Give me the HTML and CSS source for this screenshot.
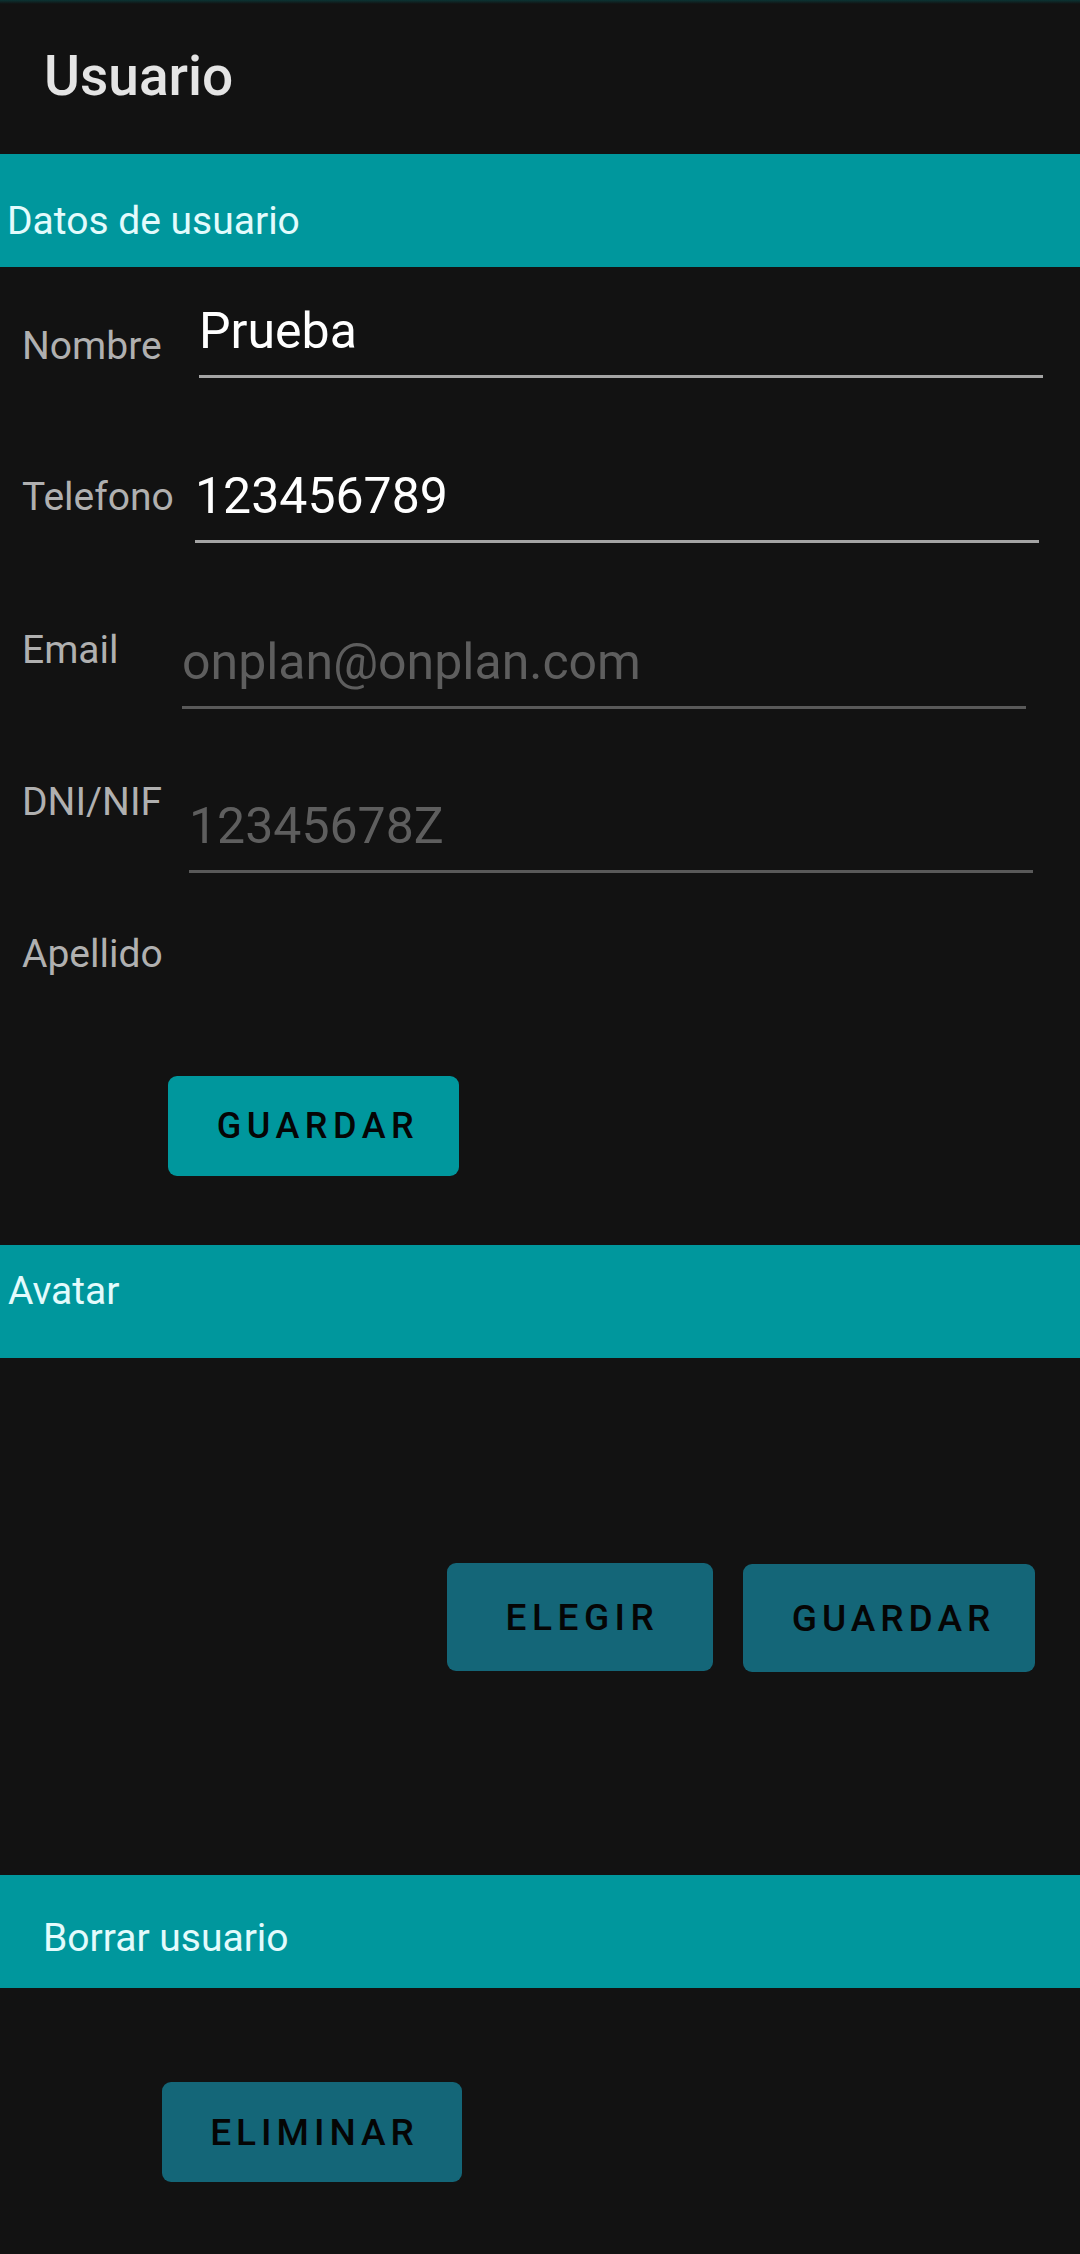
FILE: index.html
```html
<!DOCTYPE html>
<html lang="es">
<head>
<meta charset="utf-8">
<title>Usuario</title>
<link rel="stylesheet" href="styles.css">
</head>
<body>
<div class="screen">
  <header class="appbar">
    <h1 class="appbar-title">Usuario</h1>
  </header>

  <section class="section">
    <div class="section-head head-datos">Datos de usuario</div>
    <div class="form">
      <div class="row row-nombre">
        <label class="lbl lbl-nombre">Nombre</label>
        <input class="field field-nombre field-filled" type="text" value="Prueba">
      </div>
      <div class="row row-telefono">
        <label class="lbl lbl-telefono">Telefono</label>
        <input class="field field-telefono field-filled" type="text" value="123456789">
      </div>
      <div class="row row-email">
        <label class="lbl lbl-email">Email</label>
        <input class="field field-email field-empty" type="text" placeholder="onplan@onplan.com">
      </div>
      <div class="row row-dni">
        <label class="lbl lbl-dni">DNI/NIF</label>
        <input class="field field-dni field-empty" type="text" placeholder="12345678Z">
      </div>
      <div class="row row-apellido">
        <label class="lbl">Apellido</label>
      </div>
      <div class="actions actions-datos">
        <button class="btn btn-primary btn-guardar1" type="button">GUARDAR</button>
      </div>
    </div>
  </section>

  <section class="section">
    <div class="section-head head-avatar">Avatar</div>
    <div class="avatar-body">
      <div class="avatar-actions">
        <button class="btn btn-dark btn-elegir" type="button">ELEGIR</button>
        <button class="btn btn-dark btn-guardar2" type="button">GUARDAR</button>
      </div>
    </div>
  </section>

  <section class="section">
    <div class="section-head head-borrar">Borrar usuario</div>
    <div class="borrar-body">
      <button class="btn btn-dark btn-eliminar" type="button">ELIMINAR</button>
    </div>
  </section>
</div>
</body>
</html>
```

FILE: styles.css
```css
html, body {
  margin: 0;
  padding: 0;
  background: #121212;
}

body {
  font-family: Roboto, "Liberation Sans", sans-serif;
  color: #ffffff;
}

.screen {
  width: 1080px;
  height: 2254px;
  background: #121212;
  overflow: hidden;
}

/* App bar */
.appbar {
  height: 154px;
  box-sizing: border-box;
  padding: 43px 0 0 44px;
  background: linear-gradient(to bottom, #0b3434 0px, #121212 4px, #121212 100%);
}

.appbar-title {
  margin: 0;
  font-size: 55px;
  line-height: 66px;
  font-weight: 500;
  color: #e4e4e4;
}

/* Section headers */
.section-head {
  height: 113px;
  box-sizing: border-box;
  background: #00979d;
  color: #e3fbfc;
  font-size: 39px;
  line-height: 44px;
  font-weight: 400;
}

.head-datos {
  padding: 45px 0 0 7px;
}

.head-avatar {
  padding: 24px 0 0 8px;
}

.head-borrar {
  padding: 41px 0 0 43px;
}

/* Form rows */
.form {
  display: flex;
  flex-direction: column;
}

.row {
  display: flex;
  align-items: flex-start;
  padding-left: 22px;
  box-sizing: border-box;
}

.row-nombre { height: 151px; }
.row-telefono { height: 153px; }
.row-email { height: 152px; }
.row-dni { height: 152px; }
.row-apellido { height: 152px; }

.lbl {
  flex: 0 0 auto;
  margin-top: 57px;
  font-size: 39px;
  line-height: 44px;
  color: #b0b0b0;
  white-space: nowrap;
}

.lbl-nombre { width: 177px; }
.lbl-telefono { width: 173px; }
.lbl-email { width: 160px; }
.lbl-dni { width: 167px; }

.field {
  flex: 0 0 auto;
  display: block;
  box-sizing: content-box;
  width: 844px;
  height: 58px;
  padding: 0 0 15px 0;
  margin-right: 0;
  border: none;
  border-bottom: 3px solid #a4a4a4;
  background: transparent;
  outline: none;
  font-family: Roboto, "Liberation Sans", sans-serif;
  font-size: 50px;
  color: #ffffff;
}

.field-empty {
  border-bottom-color: #595959;
}

.field::placeholder {
  color: #5e5e5e;
  opacity: 1;
}

.field-nombre { margin-top: 35px; }
.field-telefono { margin-top: 49px; }
.field-email { margin-top: 62px; }
.field-dni { margin-top: 74px; }

/* Buttons */
.btn {
  display: flex;
  align-items: center;
  justify-content: center;
  border: none;
  border-radius: 9px;
  padding: 0;
  margin: 0;
  font-family: Roboto, "Liberation Sans", sans-serif;
  font-weight: 500;
  font-size: 36px;
  letter-spacing: 5.5px;
  color: #050505;
  cursor: pointer;
}

.btn-primary {
  background: #00979d;
}

.btn-dark {
  background: #146678;
}

.actions-datos {
  display: flex;
  padding: 49px 0 0 168px;
  height: 218px;
  box-sizing: border-box;
}

.btn-guardar1 {
  width: 291px;
  height: 100px;
  padding-left: 9px;
}

.avatar-body {
  height: 517px;
  box-sizing: border-box;
  padding-top: 205px;
}

.avatar-actions {
  display: flex;
  gap: 30px;
  padding-left: 447px;
}

.btn-elegir {
  width: 266px;
  height: 108px;
  font-size: 37px;
  padding-left: 5px;
}

.btn-guardar2 {
  width: 292px;
  height: 108px;
  margin-top: 1px;
  font-size: 37px;
  letter-spacing: 5px;
  padding-left: 9px;
}

.borrar-body {
  padding: 94px 0 0 162px;
}

.btn-eliminar {
  width: 300px;
  height: 100px;
  font-size: 37px;
  letter-spacing: 5px;
  padding-left: 5px;
}
```
